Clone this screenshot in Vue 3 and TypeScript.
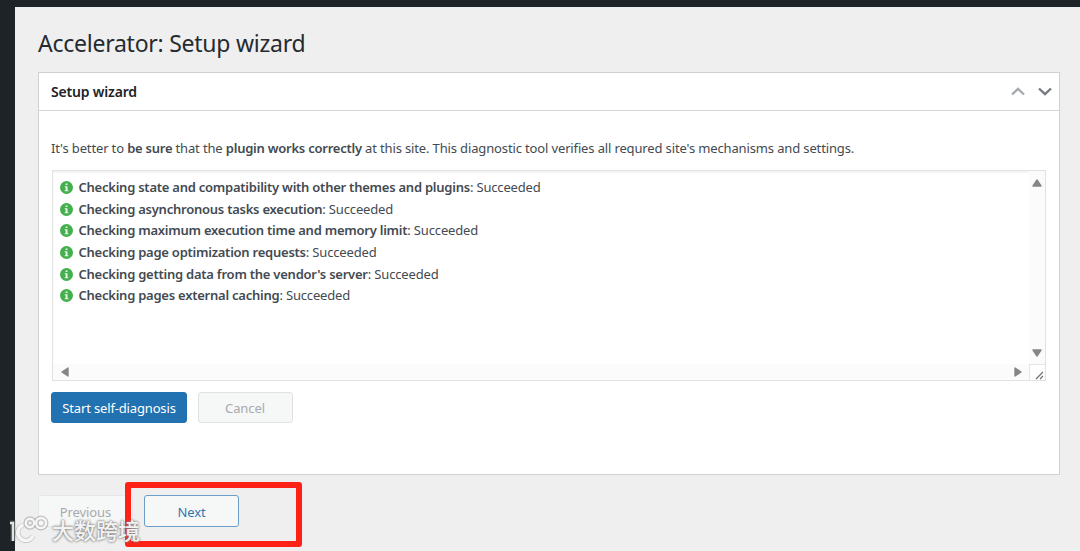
<script setup lang="ts">
interface Check {
  name: string
  status: string
}

const checks: Check[] = [
  { name: 'Checking state and compatibility with other themes and plugins', status: 'Succeeded' },
  { name: 'Checking asynchronous tasks execution', status: 'Succeeded' },
  { name: 'Checking maximum execution time and memory limit', status: 'Succeeded' },
  { name: 'Checking page optimization requests', status: 'Succeeded' },
  { name: "Checking getting data from the vendor's server", status: 'Succeeded' },
  { name: 'Checking pages external caching', status: 'Succeeded' },
]
</script>

<template>
  <div class="admin">
    <main class="content">
      <h1 class="title">Accelerator: Setup wizard</h1>

      <section class="panel">
        <header class="panel__header">
          <h2 class="panel__title">Setup wizard</h2>
          <div class="panel__arrows">
            <svg class="arrow arrow--muted" viewBox="0 0 14 9"><path d="M1 7.5 7 1.8l6 5.7" /></svg>
            <svg class="arrow" viewBox="0 0 14 9"><path d="M1 1.5 7 7.2l6-5.7" /></svg>
          </div>
        </header>

        <div class="panel__body">
          <p class="intro">
            It's better to <strong>be sure</strong> that the <strong>plugin works correctly</strong> at this site. This diagnostic tool verifies all requred site's mechanisms and settings.
          </p>

          <div class="log">
            <ul class="log__list">
              <li v-for="check in checks" :key="check.name" class="check">
                <svg class="check__icon" viewBox="0 0 13 13">
                  <circle cx="6.5" cy="6.5" r="6.5" fill="#43b04d" />
                  <path d="M5.6 2.4h1.9v1.7H5.6zM4.7 5.2h2.8v4h.9v1.1H4.7V9.2h.9V6.3h-.9z" fill="#e9f8e9" />
                </svg>
                <span class="check__text"><strong>{{ check.name }}</strong>: {{ check.status }}</span>
              </li>
            </ul>
            <div class="log__vbar">
              <svg class="thumb" viewBox="0 0 10 8"><path d="M5 1 9 7H1z" /></svg>
              <svg class="thumb" viewBox="0 0 10 8"><path d="M5 7 9 1H1z" /></svg>
            </div>
            <div class="log__hbar">
              <svg class="thumb thumb--side" viewBox="0 0 8 10"><path d="M1 5 7 1v8z" /></svg>
              <svg class="thumb thumb--side" viewBox="0 0 8 10"><path d="M7 5 1 1v8z" /></svg>
            </div>
            <div class="log__corner">
              <svg class="grip" viewBox="0 0 9 9"><path d="M1 8 8 1M5 8l3-3" /></svg>
            </div>
          </div>

          <div class="actions">
            <button type="button" class="button button--primary">Start self-diagnosis</button>
            <button type="button" class="button button--disabled" disabled>Cancel</button>
          </div>
        </div>
      </section>

      <div class="nav">
        <button type="button" class="button button--ghost" disabled>Previous</button>
        <button type="button" class="button button--next">Next</button>
      </div>
    </main>

    <div class="highlight"></div>
    <div class="watermark">
      <svg class="watermark__logo" viewBox="0 0 40 30">
        <g class="watermark__shade">
          <path d="M1 9h3v18M14 11a8 8 0 1 0 10 11" />
          <circle cx="21" cy="9" r="4.2" />
          <circle cx="32" cy="9" r="5" />
        </g>
        <g class="watermark__lines">
          <path d="M1 9h3v18" />
          <path class="watermark__hook" d="M14 11a8 8 0 1 0 10 11" />
          <circle cx="21" cy="9" r="4.2" />
          <circle cx="32" cy="9" r="5" />
        </g>
      </svg>
      <span class="watermark__text">大数跨境</span>
    </div>
  </div>
</template>

<style>
body {
  background: #1d2327;
  overflow: hidden;
}
</style>

<style scoped>
.admin {
  position: relative;
  box-sizing: border-box;
  height: 551px;
  padding: 7px 0 0 15px;
  background: #1d2327;
  color: #434a51;
  font-family: "Noto Sans", "Open Sans", sans-serif;
  font-size: 13px;
  overflow: hidden;
}

.content {
  box-sizing: border-box;
  height: 544px;
  padding: 19px 20px 0 23px;
  background: #efefef;
}

.title {
  margin: 0 0 11px;
  color: #252b30;
  font-size: 23px;
  font-weight: 400;
  line-height: 35px;
  letter-spacing: -0.25px;
  white-space: nowrap;
}

.panel {
  box-sizing: border-box;
  height: 403px;
  border: 1px solid #d0d1d3;
  background: #fff;
}

.panel__header {
  display: flex;
  align-items: center;
  justify-content: space-between;
  box-sizing: border-box;
  height: 38px;
  padding: 0 7px 0 12px;
  border-bottom: 1px solid #d5d6d8;
}

.panel__title {
  margin: 0;
  color: #1d2327;
  font-size: 14px;
  font-weight: 600;
  letter-spacing: -0.18px;
}

.panel__arrows {
  display: flex;
  gap: 13px;
}

.arrow {
  width: 14px;
  height: 9px;
  fill: none;
  stroke: #747980;
  stroke-width: 2.3;
}

.arrow--muted {
  stroke: #a5a8ad;
}

.panel__body {
  padding: 27px 13px 0 12px;
}

.intro {
  margin: 0 0 12px;
  line-height: 20px;
  letter-spacing: -0.14px;
  white-space: nowrap;
}

strong {
  font-weight: 600;
  letter-spacing: -0.24px;
}

.log {
  display: grid;
  grid-template-columns: 1fr 16px;
  grid-template-rows: 1fr 16px;
  box-sizing: border-box;
  height: 211px;
  margin-left: 1px;
  border: 1px solid #e2e2e3;
  box-shadow: inset 0 2px 2px #f3f3f3;
}

.log__list {
  margin: 0;
  padding: 6px 0 0 7px;
  list-style: none;
}

.check {
  display: flex;
  align-items: center;
  gap: 5.5px;
  height: 21.7px;
  line-height: 21.7px;
  letter-spacing: -0.16px;
  white-space: nowrap;
}

.check__icon {
  width: 13px;
  height: 13px;
  margin-bottom: 1px;
}

.log__vbar,
.log__hbar {
  display: flex;
  align-items: center;
  justify-content: space-between;
  background: #fbfbfb;
}

.log__vbar {
  flex-direction: column;
  padding: 8px 0 7px;
}

.log__hbar {
  padding: 0 7px 0 8px;
}

.thumb {
  width: 10px;
  height: 8px;
  fill: #858585;
  stroke: #858585;
  stroke-width: 1.4;
  stroke-linejoin: round;
}

.thumb--side {
  width: 8px;
  height: 10px;
}

.log__corner {
  display: flex;
  align-items: flex-end;
  justify-content: flex-end;
  padding: 0 1px 0 0;
  border-top: 1px solid #e5e5e5;
  border-left: 1px solid #e5e5e5;
}

.grip {
  width: 9px;
  height: 9px;
  fill: none;
  stroke: #6d6d6d;
  stroke-width: 1.1;
}

.actions {
  display: flex;
  gap: 10.5px;
  margin-top: 11px;
}

.actions .button {
  height: 31px;
  padding-top: 1px;
}

.nav {
  display: flex;
  gap: 11px;
  margin-top: 20px;
}

.button {
  box-sizing: border-box;
  width: 95px;
  height: 32px;
  padding: 2px 0 0;
  border: 1px solid #dfe1e3;
  border-radius: 3px;
  background: #f6f7f7;
  color: #a7aaad;
  font-family: inherit;
  font-size: 13px;
  letter-spacing: -0.1px;
  white-space: nowrap;
}

.button--primary {
  width: 136px;
  border-color: #2271b1;
  background: #2271b1;
  color: #fff;
  letter-spacing: -0.15px;
}

.button--ghost {
  border-color: #e6e7e8;
}

.button--next {
  border-color: #6a9dc8;
  color: #2f76b0;
}

/* Frame drawn over the page around the Next button */
.highlight {
  position: absolute;
  left: 125px;
  top: 482px;
  box-sizing: border-box;
  width: 177px;
  height: 65px;
  border: 6px solid #fd2116;
  border-radius: 3px;
}

.watermark {
  position: absolute;
  left: 9px;
  top: 514px;
  display: flex;
  align-items: center;
  gap: 3px;
}

.watermark__logo {
  width: 40px;
  height: 30px;
  fill: none;
}

.watermark__shade {
  stroke: rgba(120, 120, 120, 0.4);
  stroke-width: 5;
}

.watermark__lines {
  stroke: rgba(255, 255, 255, 0.85);
  stroke-width: 2.4;
}

.watermark__hook {
  stroke-width: 3.6;
}

.watermark__text {
  color: rgba(255, 255, 255, 0.92);
  font-family: "Noto Sans CJK SC", sans-serif;
  font-size: 22px;
  line-height: 28px;
  font-weight: 500;
  text-shadow: 0 0 2px #777, 0 0 3px #888;
}
</style>
